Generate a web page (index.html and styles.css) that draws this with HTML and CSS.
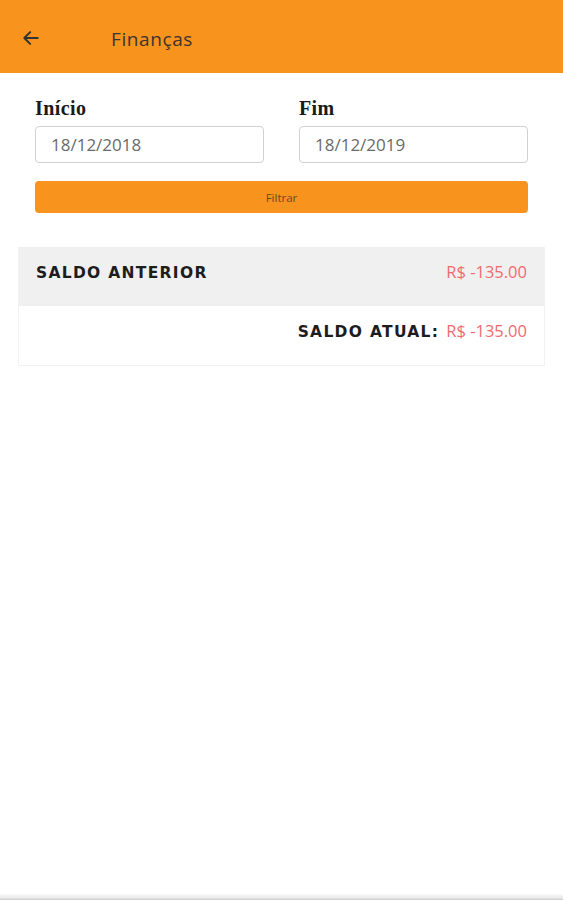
FILE: index.html
```html
<!DOCTYPE html>
<html>

<head>
  <title>Finanças</title>
  <link rel="stylesheet" href="styles.css">
</head>

<body>
  <header class="topbar">
    <svg class="back" width="20" height="20" viewBox="0 0 24 24">
      <path d="M20 12H5M11 5l-7 7 7 7" fill="none" stroke="#333" stroke-width="2.4" stroke-linecap="round" stroke-linejoin="round"/>
    </svg>
    <span class="title">Finanças</span>
  </header>

  <section class="filters">
    <div class="fields">
      <label class="field">
        <span class="label">Início</span>
        <span class="input">18/12/2018</span>
      </label>
      <label class="field">
        <span class="label">Fim</span>
        <span class="input">18/12/2019</span>
      </label>
    </div>
    <button class="filter-btn">Filtrar</button>
  </section>

  <section class="card">
    <div class="row row-prev">
      <span class="caption">SALDO ANTERIOR</span>
      <span class="amount">R$ -135.00</span>
    </div>
    <div class="row row-current">
      <span class="caption">SALDO ATUAL:</span>
      <span class="amount">R$ -135.00</span>
    </div>
  </section>

  <div class="bottom-edge"></div>
</body>

</html>
```

FILE: styles.css
```css
html, body {
  margin: 0;
  height: 100%;
}

body {
  position: relative;
  font-family: "Open Sans", sans-serif;
  background: #fff;
  color: #333;
}

.topbar {
  height: 73px;
  background: #f8931e;
  display: flex;
  align-items: center;
  padding-left: 21px;
  box-sizing: border-box;
}

.back {
  display: block;
  margin-top: 2px;
}

.title {
  margin-left: 70px;
  margin-top: 4px;
  font-size: 19px;
  color: #3b3530;
  letter-spacing: 0.6px;
}

.filters {
  padding: 22px 35px 0 35px;
}

.fields {
  display: flex;
  gap: 35px;
}

.field {
  flex: 1;
  display: flex;
  flex-direction: column;
}

.label {
  font-family: "Liberation Serif", serif;
  font-weight: bold;
  font-size: 20px;
  letter-spacing: 0.4px;
  color: #1a1a1a;
  height: 31px;
  line-height: 26px;
}

.input {
  height: 37px;
  border: 1px solid #d0d0d0;
  border-radius: 4px;
  box-sizing: border-box;
  padding-left: 15px;
  line-height: 35px;
  font-size: 17px;
  color: #6a6a6a;
}

.filter-btn {
  display: block;
  width: 100%;
  height: 32px;
  margin-top: 18px;
  border: 0;
  border-radius: 4px;
  background: #f8931e;
  font-family: "Open Sans", sans-serif;
  font-size: 11.5px;
  color: #6b4a22;
}

.card {
  margin: 34px 18px 0 18px;
  border: 1px solid #f2f2f2;
  border-top: 0;
}

.row {
  display: flex;
  align-items: baseline;
  padding: 0 17px;
  height: 59px;
  box-sizing: border-box;
}

.row-prev {
  background: #f0f0f0;
  justify-content: space-between;
  padding-top: 13px;
}

.row-current {
  justify-content: flex-end;
  gap: 7px;
  padding-top: 13px;
}

.caption {
  font-family: "DejaVu Sans", sans-serif;
  font-weight: bold;
  font-size: 15.5px;
  letter-spacing: 1.3px;
  color: #1d1d1d;
}

.amount {
  font-size: 16.5px;
  color: #f06b6f;
}

.bottom-edge {
  position: absolute;
  left: 0;
  right: 0;
  bottom: 0;
  height: 6px;
  background: linear-gradient(#fbfbfb, #e8e8e8 70%, #c8c8c8);
}
```
